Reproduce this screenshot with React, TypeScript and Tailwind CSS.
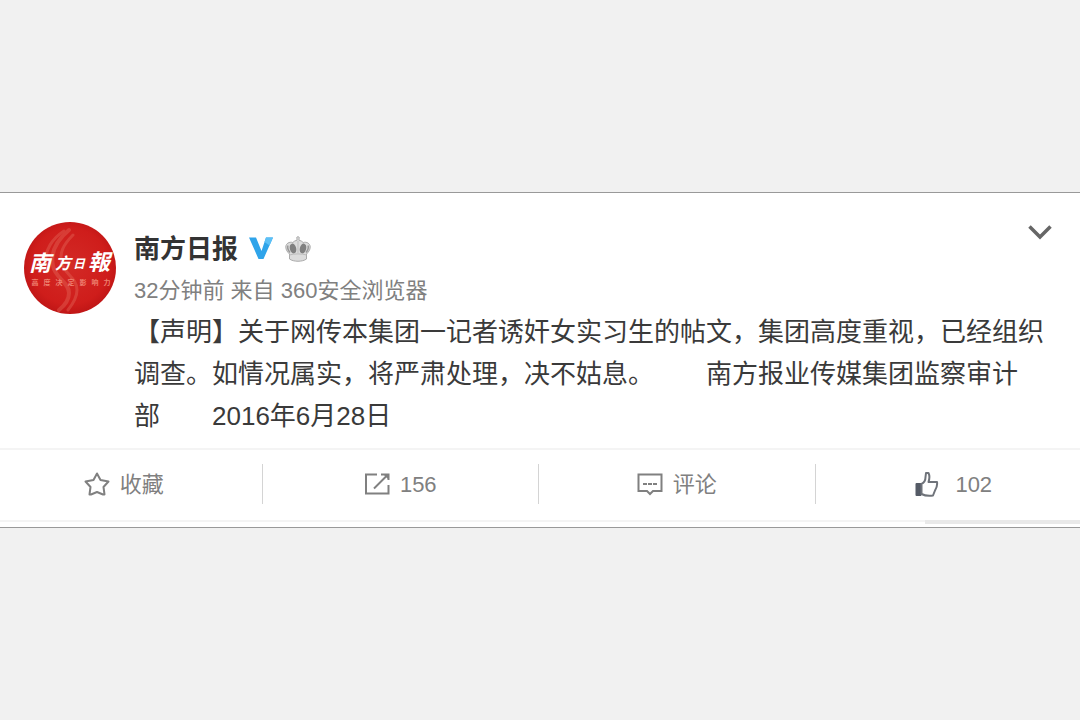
import type { ReactNode } from "react";

const post = {
    author: "南方日报",
    time: "32分钟前",
    source: "360安全浏览器",
    text: "【声明】关于网传本集团一记者诱奸女实习生的帖文，集团高度重视，已经组织调查。如情况属实，将严肃处理，决不姑息。\u3000\u3000南方报业传媒集团监察审计\n部\u3000\u30002016年6月28日",
};

function Avatar() {
    return (
        <svg viewBox="0 0 92 92" className="size-[92px] shrink-0" role="img" aria-label={post.author}>
            <defs>
                <radialGradient id="seal" cx="50%" cy="48%" r="52%">
                    <stop offset="0" stopColor="#d32a26" />
                    <stop offset="0.8" stopColor="#cf1d1b" />
                    <stop offset="1" stopColor="#c01616" />
                </radialGradient>
            </defs>
            <circle cx="46" cy="46" r="46" fill="url(#seal)" />
            <g fill="none" stroke="#e56a5c" strokeLinecap="round" opacity="0.4">
                <path d="M45 8C33 18 26 30 29 44c2 12 16 16 16 27 0 8-5 13-10 17" strokeWidth="4" />
                <path d="M49 13C39 23 35 31 38 42c3 10 15 14 15 26 0 8-5 15-9 20" strokeWidth="3" />
                <path d="M40 9C29 16 20 28 22 42" strokeWidth="3" />
            </g>
            <g fill="#fff" fontFamily="'Noto Sans CJK TC', sans-serif" fontWeight="700" fontStyle="italic">
                <text x="5" y="49" fontSize="22">南</text>
                <text x="31" y="47" fontSize="16">方</text>
                <text x="49" y="46" fontSize="12">日</text>
                <text x="64" y="48" fontSize="22">報</text>
            </g>
            <g fill="#ee8070" fontFamily="'Noto Sans CJK SC', sans-serif" fontSize="7" fontWeight="700" textAnchor="middle">
                {"高度决定影响力".split("").map((char, i) => (
                    <text key={char} x={11 + i * 12} y="63">{char}</text>
                ))}
            </g>
        </svg>
    );
}

function VerifiedIcon() {
    return (
        <svg viewBox="0 0 24 24" className="size-6" aria-hidden="true">
            <path d="M0 .5h7L12.500 14 17 .5h7L14.500 22h-5z" fill="#2fa4ea" />
            <path d="M17 .5h7L20.500 8.500l-5-3.500z" fill="#5cc0f6" />
        </svg>
    );
}

function CrownIcon() {
    return (
        <svg viewBox="0 0 26 28" className="h-7 w-[26px]" aria-hidden="true">
            <path
                d="M4.500 24v-5C2.500 17 .8 15 .8 12c0-3.500 3.500-5.500 7-4.500C9 6.300 10.300 5.500 12 5.200V3.800a1.300 1.300 0 1 1 2 0v1.400c1.700.3 3 1.100 4.200 2.300 3.500-1 7 1 7 4.500 0 3-1.700 5-3.700 7v5c-4 3-13 3-17 0z"
                fill="#dcdcdc"
                stroke="#aaa"
            />
            <ellipse cx="8" cy="13.500" rx="3.200" ry="5" fill="#808080" transform="rotate(-14 8 13.500)" />
            <ellipse cx="18" cy="13.500" rx="3.200" ry="5" fill="#808080" transform="rotate(14 18 13.500)" />
            <path d="M3 10.500c-1 2.500 0 4.500 2 7M23 10.500c1 2.500 0 4.500-2 7" fill="none" stroke="#999" strokeWidth="1.500" />
            <path d="M13 6v12" fill="none" stroke="#bdbdbd" />
            <path d="M4.500 20c4-1.500 13-1.500 17 0" fill="none" stroke="#bbb" />
        </svg>
    );
}

function StarIcon() {
    return (
        <svg viewBox="0 0 26 24" className="h-6 w-[26px]" fill="none" stroke="currentColor" strokeWidth="2" strokeLinejoin="round" aria-hidden="true">
            <path d="M13 1.500l3.500 6.500 8 1.500-5 5.500 1 7.500H19l-6-2.500-6 2.500H5.500l1-7.500-5-5.500 8-1.500z" />
        </svg>
    );
}

function RepostIcon() {
    return (
        <svg viewBox="0 0 26 24" className="h-6 w-[26px]" fill="none" stroke="currentColor" strokeWidth="2" aria-hidden="true">
            <path d="M13 2.500H2v19h22.500V13" />
            <path d="M10 16.500L23 3.500" />
            <path d="M17 2.500h7.500V8" />
            <path d="M20 3h4v4z" fill="currentColor" stroke="none" />
        </svg>
    );
}

function CommentIcon() {
    return (
        <svg viewBox="0 0 26 24" className="h-6 w-[26px]" fill="none" stroke="currentColor" strokeWidth="2" aria-hidden="true">
            <path d="M1.500 2.500h23V19H16l-3 3-3-3H1.500z" />
            <path d="M6 12h14" strokeDasharray="4 1" />
        </svg>
    );
}

function LikeIcon() {
    return (
        <svg viewBox="0 0 24 26" className="h-[26px] w-6" fill="none" stroke="#6f737a" strokeWidth="2" strokeLinejoin="round" aria-hidden="true">
            <path d="M1.500 13h4v11h-4z" fill="#555b66" stroke="#555b66" />
            <path d="M6.500 13c3-1.500 4-4 4-7l.5-4h2.500c1.500 3 1 6 0 9H22c.5 3-.5 6-2 8.500L18 24.500c-4 .5-8 .3-11.500-1.500z" />
        </svg>
    );
}

function Action({ icon, children, wide }: { icon: ReactNode; children: ReactNode; wide?: boolean }) {
    return (
        <li className="border-r border-[#d4d4d4] last:border-r-0">
            <button type="button" className={`flex h-10 w-full items-center justify-center ${wide ? "gap-4" : "gap-2.5"}`}>
                {icon}
                <span>{children}</span>
            </button>
        </li>
    );
}

export default function App() {
    return (
        <main className="flex min-h-screen items-center bg-[#f1f1f1] font-['Liberation_Sans','Noto_Sans_CJK_SC',sans-serif] [text-spacing-trim:space-all]">
            <article className="w-full overflow-hidden border-y border-[#999] bg-white">
                <div className="flex gap-[18px] px-6 pt-[29px] pb-[11px]">
                    <Avatar />
                    <div className="min-w-0 flex-1 pt-[5px]">
                        <header className="flex items-center gap-[11px]">
                            <h1 className="text-[26px] leading-[44px] font-bold text-[#333]">{post.author}</h1>
                            <div className="flex items-center gap-3">
                                <VerifiedIcon />
                                <CrownIcon />
                            </div>
                        </header>
                        <p className="text-[22px] leading-[40px] text-[#808080]">
                            {post.time} 来自 {post.source}
                        </p>
                        <p className="-mr-3 text-[26px] leading-[42px] whitespace-pre-line text-[#3a3a3a]">{post.text}</p>
                    </div>
                    <button type="button" aria-label="更多" className="-ml-[42px] flex h-5 w-7 items-center justify-start self-start">
                        <svg viewBox="0 0 24 16" className="h-4 w-6" fill="none" stroke="#666" strokeWidth="3.500" aria-hidden="true">
                            <path d="M1.500 2.500L12 13 22.500 2.500" />
                        </svg>
                    </button>
                </div>
                <footer className="border-y-2 border-[#f4f4f4] pt-3.5 pb-4">
                    <ul className="-mr-3 -ml-3.5 grid grid-cols-4 text-[22px] text-[#808080]">
                        <Action icon={<StarIcon />}>收藏</Action>
                        <Action icon={<RepostIcon />}>156</Action>
                        <Action icon={<CommentIcon />}>评论</Action>
                        <Action icon={<LikeIcon />} wide>102</Action>
                    </ul>
                </footer>
                <div className="-mt-0.5 flex h-[7px] justify-end">
                    <div className="h-1 w-[155px] bg-[#e9e9e9]" />
                </div>
            </article>
        </main>
    );
}
